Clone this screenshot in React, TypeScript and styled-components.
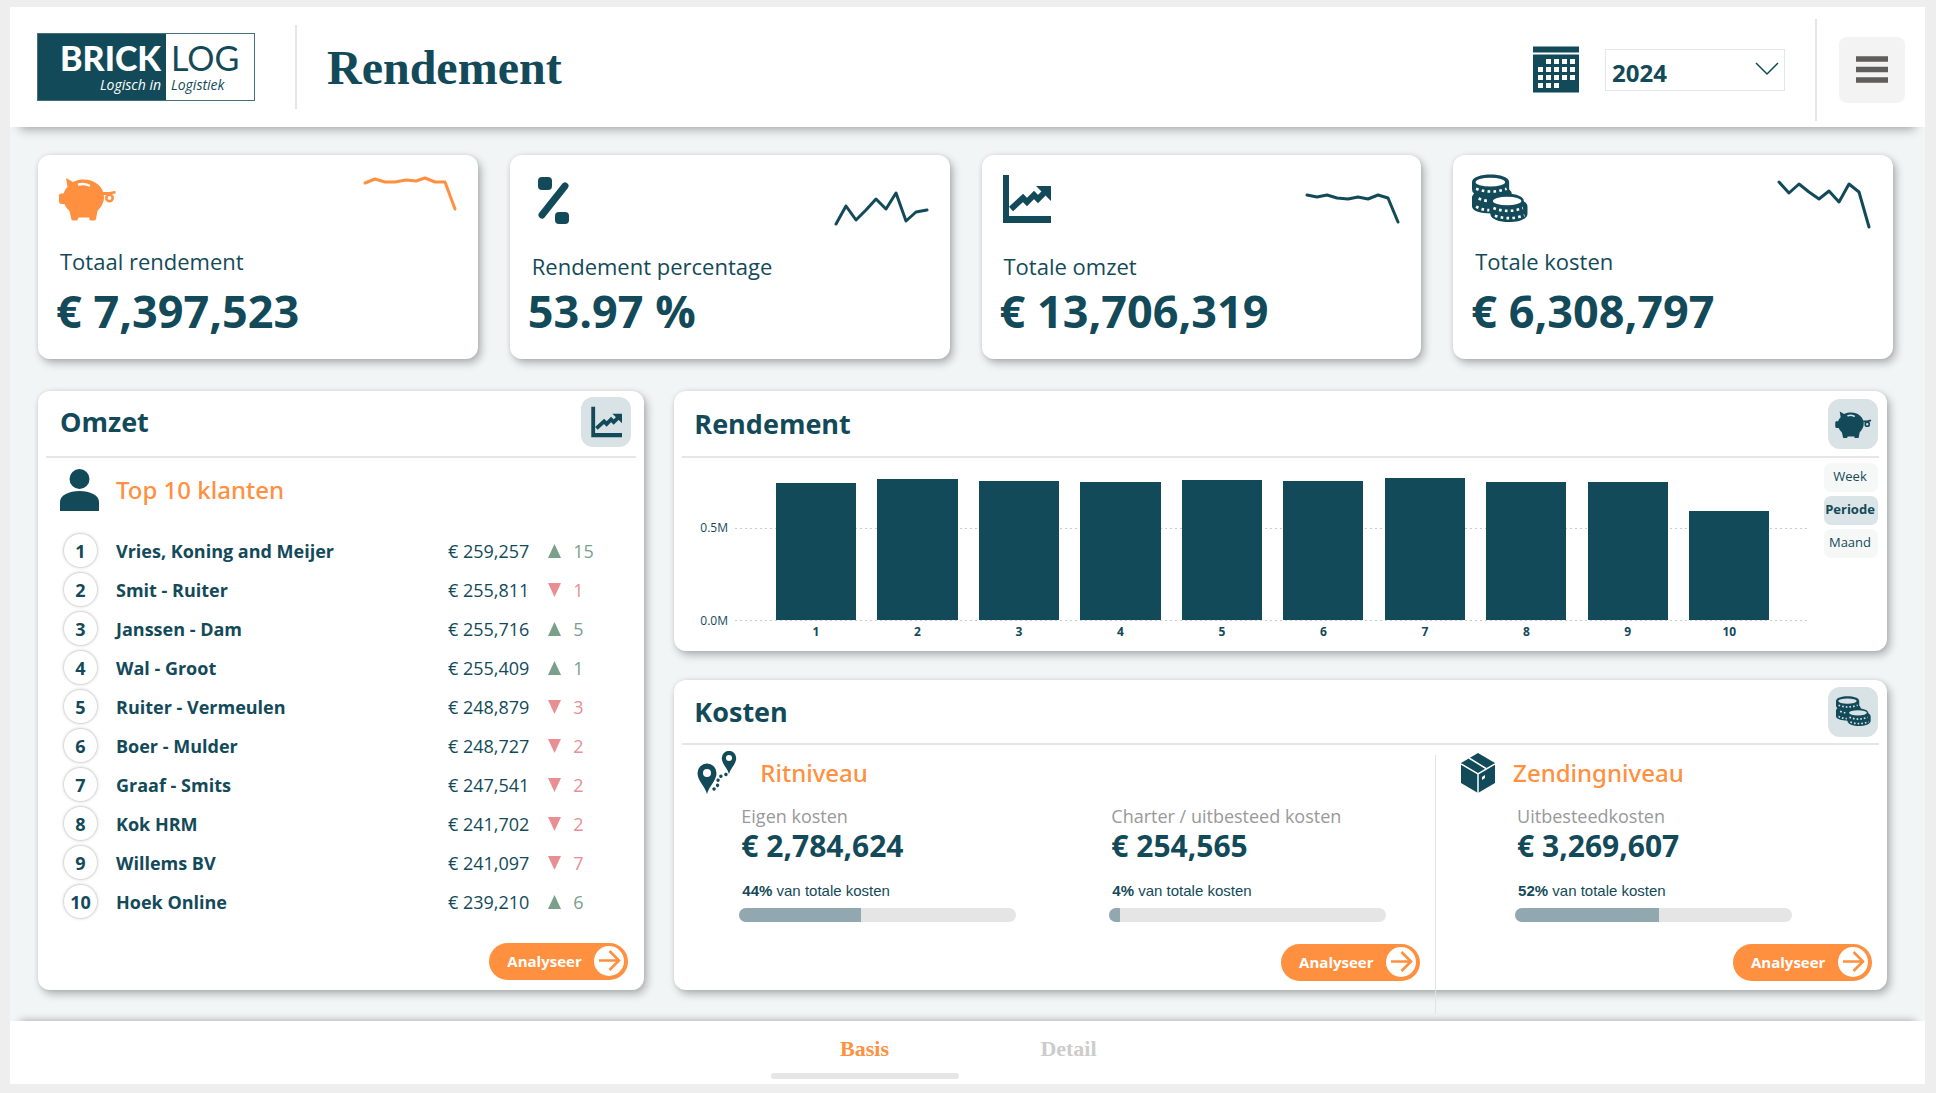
import React, { useState } from "react";
import styled, { createGlobalStyle } from "styled-components";

const TEAL = "#134a59";
const ORANGE = "#ff9040";
const SANS = '"Open Sans", "Noto Sans", sans-serif';
const SERIF = '"Liberation Serif", "Times New Roman", serif';

const GlobalStyle = createGlobalStyle`
  * { box-sizing: border-box; }
  body { margin: 0; background: #eeeeee; font-family: ${SANS}; color: ${TEAL}; }
  h1, h2, h3, p { margin: 0; }
  button { font-family: inherit; cursor: pointer; }
`;

const Frame = styled.div`
  margin: 7px 11px 9px 10px;
  display: flex;
  flex-direction: column;
  min-height: calc(100vh - 16px);
  background: #f1f5f6;
`;

const Header = styled.header`
  height: 120px;
  padding: 0 20px 0 27px;
  display: flex;
  align-items: center;
  background: #ffffff;
  box-shadow: 0 12px 10px -10px rgba(0, 0, 0, 0.35);
  clip-path: inset(0 0 -24px 0);
`;

const Logo = styled.div`
  width: 218px;
  height: 68px;
  margin-right: 40px;
  display: grid;
  grid-template-columns: 128px 1fr;
  border: 1px solid #45707b;
`;

const LogoHalf = styled.div<{ $dark?: boolean }>`
  padding: 8px 5px 0;
  display: flex;
  flex-direction: column;
  gap: 3px;
  text-align: ${(p) => (p.$dark ? "right" : "left")};
  background: ${(p) => (p.$dark ? TEAL : "#ffffff")};
  color: ${(p) => (p.$dark ? "#ffffff" : TEAL)};
`;

const LogoWord = styled.div<{ $heavy?: boolean }>`
  font: ${(p) => (p.$heavy ? 900 : 400)} 34px/32px Lato, sans-serif;
`;

const LogoTag = styled.div`
  font: italic 400 14px/16px ${SANS};
  white-space: nowrap;
`;

const Rule = styled.div<{ $height: number }>`
  width: 2px;
  height: ${(p) => p.$height}px;
  background: #e6e6e6;
`;

const Title = styled.h1`
  margin-left: 30px;
  padding-top: 2px;
  font: 700 48px/56px ${SERIF};
`;

const HeaderTools = styled.div`
  margin-left: auto;
  padding-top: 6px;
  display: flex;
  align-items: center;
`;

const YearBox = styled.label`
  width: 180px;
  height: 42px;
  margin: 0 30px 0 26px;
  position: relative;
  display: flex;
  border: 1px solid #e6e6e6;
  svg { position: absolute; right: 5px; top: 12px; pointer-events: none; }
`;

const YearSelect = styled.select`
  width: 100%;
  padding: 6px 0 0 6px;
  border: 0;
  background: transparent;
  appearance: none;
  color: ${TEAL};
  font: 700 24px/32px ${SANS};
`;

const MenuButton = styled.button`
  width: 66px;
  height: 66px;
  margin-left: 22px;
  padding: 0;
  display: grid;
  place-items: center;
  border: 0;
  border-radius: 8px;
  background: #f3f3f3;
`;

const Main = styled.main`
  flex: 1;
  padding: 28px 32px 31px 28px;
  display: flex;
  flex-direction: column;
  gap: 32px;
`;

const KpiGrid = styled.section`
  display: grid;
  grid-template-columns: repeat(4, 1fr);
  gap: 32px;
`;

const Card = styled.article`
  border-radius: 12px;
  background: #ffffff;
  box-shadow: 3px 4px 8px rgba(0, 0, 0, 0.28), 0 0 4px rgba(0, 0, 0, 0.08);
`;

const KpiCard = styled(Card)`
  height: 204px;
  padding: 15px 20px 0 18px;
  display: flex;
  flex-direction: column;
`;

const KpiTop = styled.div`
  height: 72px;
  display: flex;
  justify-content: space-between;
`;

const KpiIcon = styled.div<{ $color: string }>`
  padding: 4px 0 0 1px;
  color: ${(p) => p.$color};
`;

const KpiLabel = styled.h2<{ $low?: boolean }>`
  padding: ${(p) => (p.$low ? 8 : 3)}px 0 0 4px;
  height: 43px;
  font: 400 22px/32px ${SANS};
`;

const KpiValue = styled.p`
  font: 700 45px/52px ${SANS};
`;

const PanelGrid = styled.section`
  flex: 1;
  padding-right: 6px;
  display: grid;
  grid-template-columns: 1fr 2fr;
  gap: 30px;
`;

const Stack = styled.div`
  display: flex;
  flex-direction: column;
  gap: 29px;
`;

const Panel = styled(Card)<{ $grow?: boolean }>`
  flex: ${(p) => (p.$grow ? 1 : "none")};
  padding: 0 8px;
  display: flex;
  flex-direction: column;
`;

const PanelHeader = styled.header<{ $inset?: boolean; $compact?: boolean }>`
  height: ${(p) => (p.$compact ? 65 : 67)}px;
  padding: ${(p) => (p.$inset ? "0 5px 3px 14px" : "0 1px 0 12px")};
  display: flex;
  align-items: center;
  justify-content: space-between;
  border-bottom: 2px solid #e6e6e6;
`;

const PanelTitle = styled.h2`
  font: 700 27px/40px ${SANS};
`;

const IconButton = styled.button`
  width: 50px;
  height: 50px;
  padding: 0;
  display: grid;
  place-items: center;
  border: 0;
  border-radius: 12px;
  background: #d9e2e5;
  color: ${TEAL};
`;

const SubHeader = styled.div<{ $gap: number }>`
  height: 44px;
  display: flex;
  align-items: center;
  gap: ${(p) => p.$gap}px;
`;

const SubTitle = styled.h3`
  font: 500 24px/32px "Noto Sans", sans-serif;
  color: ${ORANGE};
`;

const Customers = styled.div`
  flex: 1;
  padding: 10px 8px 10px 14px;
  display: flex;
  flex-direction: column;
`;

const RankTable = styled.table`
  width: 100%;
  margin-top: 19px;
  border-collapse: collapse;
  td { height: 39px; padding: 0; font-size: 18px; line-height: 24px; }
`;

const RankCell = styled.td`
  width: 56px;
`;

const Rank = styled.span`
  width: 35px;
  height: 35px;
  margin-left: 3px;
  display: grid;
  place-items: center;
  border-radius: 50%;
  box-shadow: inset 0 0 0 1px #dadada, 0 0 3px rgba(0, 0, 0, 0.16);
  font-weight: 700;
`;

const NameCell = styled.td`
  font-weight: 700;
`;

const AmountCell = styled.td`
  text-align: right;
`;

const TrendCell = styled.td<{ $up: boolean }>`
  width: 99px;
  color: ${(p) => (p.$up ? "#7a9f8a" : "#e98f94")};
`;

const Trend = styled.span`
  padding-left: 19px;
  display: flex;
  align-items: center;
  gap: 12px;
`;

const AnalyseButton = styled.button`
  width: 139px;
  height: 37px;
  margin-top: auto;
  padding: 0 4px 1px 18px;
  align-self: flex-end;
  display: flex;
  align-items: center;
  justify-content: space-between;
  border: 0;
  border-radius: 19px;
  background: ${ORANGE};
  color: #ffffff;
  font: 700 15px/20px ${SANS};
`;

const ChartBody = styled.div`
  padding: 3px 1px 0 18px;
  display: grid;
  grid-template-columns: 35px 1fr 54px;
`;

const AxisY = styled.div`
  height: 168px;
  padding-top: 59px;
  display: flex;
  flex-direction: column;
  justify-content: space-between;
  font-size: 12px;
  line-height: 16px;
`;

const Plot = styled.div`
  height: 190px;
  padding-right: 14px;
  display: grid;
  grid-template: 160px 24px / 1fr;
`;

const GridLines = styled.div`
  grid-area: 1 / 1;
  margin-top: 67px;
  --dots: repeating-linear-gradient(90deg, #cccccc 0 2px, transparent 2px 5px);
  background: var(--dots) top / 100% 1px no-repeat, var(--dots) bottom / 100% 1px no-repeat;
`;

const Bars = styled.div`
  grid-area: 1 / 1;
  padding: 0 30px 1px;
  display: grid;
  grid-template-columns: repeat(10, 1fr);
  align-items: end;
`;

const Bar = styled.div`
  margin: 0 auto;
  width: 79%;
  background: ${TEAL};
`;

const AxisX = styled.div`
  padding: 0 30px;
  display: grid;
  grid-template-columns: repeat(10, 1fr);
  text-align: center;
  font-size: 12px;
  font-weight: 700;
  line-height: 22px;
`;

const Periods = styled.div`
  padding-top: 2px;
  display: flex;
  flex-direction: column;
  gap: 4px;
`;

const PeriodButton = styled.button<{ $active: boolean }>`
  height: 29px;
  padding: 0 2px 3px 0;
  border: 0;
  border-radius: 7px;
  background: ${(p) => (p.$active ? "#dbe4e6" : "#f6f8f8")};
  color: ${TEAL};
  font: ${(p) => (p.$active ? 700 : 400)} 13px/20px ${SANS};
`;

const CostBody = styled.div`
  flex: 1;
  display: grid;
  grid-template-columns: 753fr 444fr;
`;

const CostColumn = styled.section<{ $left: number; $right: number }>`
  padding: 6px ${(p) => p.$right}px 9px ${(p) => p.$left}px;
  display: flex;
  flex-direction: column;
`;

const TripColumn = styled(CostColumn)`
  position: relative;
  &::after {
    content: "";
    position: absolute;
    right: -1px;
    top: 10px;
    bottom: -24px;
    width: 1px;
    background: #e2e2e2;
  }
`;

const CostItems = styled.div<{ $indent: number }>`
  padding: 9px 0 0 ${(p) => p.$indent}px;
  display: grid;
  grid-template-columns: repeat(auto-fill, 277px);
  column-gap: 93px;
`;

const CostLabel = styled.p`
  padding-left: 2px;
  font-size: 18px;
  line-height: 24px;
  color: #999999;
`;

const CostValue = styled.p`
  padding-left: 2px;
  font: 700 30px/36px ${SANS};
`;

const CostShare = styled.p`
  padding: 17px 0 0 3px;
  font: 400 15px/20px "Liberation Sans", Arial, sans-serif;
`;

const Meter = styled.div`
  height: 14px;
  margin-top: 7px;
  border-radius: 7px;
  overflow: hidden;
  background: #e5e5e5;
`;

const MeterFill = styled.div`
  height: 100%;
  background: #91a8b0;
`;

const Footer = styled.footer`
  height: 63px;
  padding-right: 2px;
  display: flex;
  justify-content: center;
  gap: 16px;
  background: #ffffff;
  box-shadow: 0 -10px 8px -10px rgba(0, 0, 0, 0.35);
`;

const Tab = styled.a<{ $active?: boolean }>`
  width: 188px;
  padding: 16px 0 5px;
  display: flex;
  flex-direction: column;
  align-items: center;
  justify-content: space-between;
  font: 700 22px/24px ${SERIF};
  color: ${(p) => (p.$active ? ORANGE : "#cccccc")};
  text-decoration: none;
  &::after {
    content: "";
    width: 100%;
    height: 6px;
    border-radius: 3px;
    background: ${(p) => (p.$active ? "#e6e6e6" : "transparent")};
  }
`;

function PigIcon({ width, shine }: { width: number; shine: string }) {
  return (
    <svg width={width} viewBox="-2 -4 60 47" fill="currentColor" aria-hidden="true">
      <path d="M7 0 L14 4 C18 2 21 1.500 25 1.500 C36 1.500 45 9 45 19 C45 25 42 29 38.500 33 L37 41 Q36.500 42.500 35 42.500 H32 Q30.500 42.500 30.300 41 V39.500 H19.500 L19 41 Q18.500 42.500 17 42.500 H14 Q12.500 42.500 12.300 41 L10.500 33 C8 30.500 6.500 29 5.500 26 H2 Q0 25.500 0 23.500 V17.500 Q0 15.500 2 15.500 H4.500 C5.500 12.500 7 10.500 8.500 9 Z" />
      <path d="M20 6.500 Q25 5 30 7.500" fill="none" stroke={shine} strokeWidth="2.400" strokeLinecap="round" />
      <path d="M44 15.500 H50 L56.500 14" fill="none" stroke="currentColor" strokeWidth="2.800" />
      <circle cx="50.500" cy="20" r="3.200" fill="none" stroke="currentColor" strokeWidth="2.600" />
    </svg>
  );
}

function PercentIcon() {
  return (
    <svg width="44" height="51" viewBox="-2 -3 44 51" fill="currentColor" aria-hidden="true">
      <rect x="7" y="0" width="14" height="13" rx="4" />
      <rect x="24" y="35" width="14" height="12" rx="4" />
      <path d="M11 38 L34 9" stroke="currentColor" strokeWidth="7" strokeLinecap="round" />
    </svg>
  );
}

function GrowthIcon({ size }: { size: number }) {
  return (
    <svg width={size} height={size} viewBox="-2 -1 50 50" fill="currentColor" aria-hidden="true">
      <path d="M0 0 H6 V41 H48 V48 H0 Z" />
      <path d="M8 34 L20 23 L24 27 L31 20 L35 24 L42 17" fill="none" stroke="currentColor" strokeWidth="6" />
      <path d="M33 11 H48 V26 Z" />
    </svg>
  );
}

function CoinsIcon({ width, face }: { width: number; face: string }) {
  return (
    <svg width={width} viewBox="0 0 55 48" aria-hidden="true">
      <g fill="currentColor">
        <path d="M0 8 C0 -2 36.500 -2 36.500 8 V15 Q39 17 39 20 V32 C36 41 0 41 0 32 V22 L2 19 Q0 18 0 15 Z" />
        <path d="M19.500 27 C19.500 17 51 17 51 27 Q54.500 29 54.500 32 V39 C54.500 50 18 50 18 39 Z" />
      </g>
      <g fill="none" stroke={face} strokeWidth="2.600" strokeDasharray="2.600 3.200">
        <path d="M4 14.500 Q18.500 20 34 14.500" />
        <path d="M6.500 24 Q12 26.500 17 26.500" />
        <path d="M4 32 Q10 35.500 17 35.500" />
        <path d="M21 33.500 Q35 39 50 33.500" />
        <path d="M22.500 41 Q37 46 51.500 40.500" />
      </g>
      <g fill={face}>
        <ellipse cx="18" cy="8" rx="14.500" ry="4.200" />
        <ellipse cx="34.500" cy="26.500" rx="14" ry="4.200" />
      </g>
    </svg>
  );
}

function CalendarIcon() {
  const cells = [
    [1, 2, 3, 4],
    [0, 1, 2, 3, 4],
    [0, 1, 2, 3, 4],
    [0, 1, 2],
  ];
  return (
    <svg width="46" height="48" viewBox="0 0 46 48" aria-hidden="true">
      <path d="M0 0.500 H46 V6.500 H0 Z M0 8.500 H46 V46.500 H0 Z" fill={TEAL} />
      {cells.map((row, r) =>
        row.map((c) => <rect key={`${r}-${c}`} x={5 + c * 8} y={13 + r * 8} width="5" height="5" fill="#fff" />)
      )}
    </svg>
  );
}

function PersonIcon() {
  return (
    <svg width="39" height="42" viewBox="0 0 39 42" fill="currentColor" aria-hidden="true">
      <circle cx="19.500" cy="10" r="10" />
      <path d="M0 42 V33 C0 26 9 22 19.500 22 C30 22 39 26 39 33 V42 Z" />
    </svg>
  );
}

function RouteIcon() {
  const pin = "M0 0 C-2 -8 -9.500 -13 -9.500 -21 A9.500 9.500 0 0 1 9.500 -21 C9.500 -13 2 -8 0 0 Z M0 -25 A4 4 0 1 0 0 -17 A4 4 0 1 0 0 -25 Z";
  return (
    <svg width="40" height="44" viewBox="0 0 40 44" fill="currentColor" fillRule="evenodd" aria-hidden="true">
      <path d={pin} transform="translate(10 43)" />
      <path d={pin} transform="translate(32 23) scale(.76)" />
      <path d="M17 38 Q22 35 21 30 Q21 25 29 23.500" fill="none" stroke="currentColor" strokeWidth="3.400" strokeLinecap="round" strokeDasharray="0.100 5" />
    </svg>
  );
}

function BoxIcon() {
  return (
    <svg width="34" height="40" viewBox="0 0 34 40" aria-hidden="true">
      <path d="M17 0 L34 10 V30 L17 40 L0 30 V10 Z" fill="currentColor" />
      <path d="M0 11 L17 21 L34 11 M17 21 V40 M8 5 L25 15.500" fill="none" stroke="#fff" strokeWidth="1.500" />
      <path d="M21 24 L24 22 V25 L21 27 Z" fill="#fff" />
    </svg>
  );
}

function ArrowIcon() {
  return (
    <svg width="30" height="30" viewBox="0 0 30 30" aria-hidden="true">
      <circle cx="15" cy="15" r="15" fill="#fff" />
      <path d="M5 14.500 H25 M15.500 5 L25 14.500 L15.500 24" fill="none" stroke={ORANGE} strokeWidth="2.600" />
    </svg>
  );
}

function Sparkline({ points, color }: { points: string; color: string }) {
  return (
    <svg width="96" height="64" viewBox="0 0 96 64" aria-hidden="true">
      <polyline points={points} fill="none" stroke={color} strokeWidth="3" strokeLinejoin="round" strokeLinecap="round" />
    </svg>
  );
}

const kpis = [
  {
    label: "Totaal rendement", value: "€ 7,397,523", color: ORANGE, low: false,
    icon: <PigIcon width={60} shine="#ffffff" />, points: "3,13 13,9 23,12 33,12 44,10 54,11 63,8 73,12 83,12 93,39",
  },
  {
    label: "Rendement percentage", value: "53.97 %", color: TEAL, low: true,
    icon: <PercentIcon />, points: "2,54 12,36 22,50 32,40 42,29 52,39 62,23 72,51 82,42 93,40",
  },
  {
    label: "Totale omzet", value: "€ 13,706,319", color: TEAL, low: true,
    icon: <GrowthIcon size={50} />, points: "2,25 12,27 22,25 32,28 43,29 53,27 63,29 73,25 83,28 93,52",
  },
  {
    label: "Totale kosten", value: "€ 6,308,797", color: TEAL, low: false,
    icon: <CoinsIcon width={56} face="#ffffff" />, points: "2,12 12,23 22,14 32,22 42,29 52,21 62,32 72,14 82,22 92,57",
  },
];

const customers: [string, string, number][] = [
  ["Vries, Koning and Meijer", "259,257", 15],
  ["Smit - Ruiter", "255,811", -1],
  ["Janssen - Dam", "255,716", 5],
  ["Wal - Groot", "255,409", 1],
  ["Ruiter - Vermeulen", "248,879", -3],
  ["Boer - Mulder", "248,727", -2],
  ["Graaf - Smits", "247,541", -2],
  ["Kok HRM", "241,702", -2],
  ["Willems BV", "241,097", -7],
  ["Hoek Online", "239,210", 6],
];

const returns = [137, 141, 139, 138, 140, 139, 142, 138, 138, 109];
const periods = ["Week", "Periode", "Maand"];

function Analyse() {
  return (
    <AnalyseButton type="button">
      Analyseer
      <ArrowIcon />
    </AnalyseButton>
  );
}

function Cost({ label, value, share }: { label: string; value: string; share: number }) {
  return (
    <div>
      <CostLabel>{label}</CostLabel>
      <CostValue>{value}</CostValue>
      <CostShare><b>{share}%</b> van totale kosten</CostShare>
      <Meter role="progressbar" aria-label={label} aria-valuenow={share} aria-valuemin={0} aria-valuemax={100}>
        <MeterFill style={{ width: `${share}%` }} />
      </Meter>
    </div>
  );
}

export default function App() {
  const [period, setPeriod] = useState("Periode");
  return (
    <>
      <GlobalStyle />
      <Frame>
        <Header>
          <Logo>
            <LogoHalf $dark>
              <LogoWord $heavy>BRICK</LogoWord>
              <LogoTag>Logisch in</LogoTag>
            </LogoHalf>
            <LogoHalf>
              <LogoWord>LOG</LogoWord>
              <LogoTag>Logistiek</LogoTag>
            </LogoHalf>
          </Logo>
          <Rule $height={84} />
          <Title>Rendement</Title>
          <HeaderTools>
            <CalendarIcon />
            <YearBox>
              <YearSelect aria-label="Jaar" defaultValue="2024">
                <option>2024</option>
                <option>2023</option>
              </YearSelect>
              <svg width="24" height="14" viewBox="0 0 24 14" aria-hidden="true">
                <path d="M1 1 L12 12 L23 1" fill="none" stroke={TEAL} strokeWidth="1.500" />
              </svg>
            </YearBox>
            <Rule $height={102} />
            <MenuButton type="button" aria-label="Menu">
              <svg width="32" height="28" viewBox="0 0 32 28" aria-hidden="true">
                <path d="M0 3 H32 M0 13.500 H32 M0 24 H32" stroke="#605e5c" strokeWidth="5.500" />
              </svg>
            </MenuButton>
          </HeaderTools>
        </Header>

        <Main>
          <KpiGrid>
            {kpis.map((k) => (
              <KpiCard key={k.label}>
                <KpiTop>
                  <KpiIcon $color={k.color}>{k.icon}</KpiIcon>
                  <Sparkline points={k.points} color={k.color} />
                </KpiTop>
                <KpiLabel $low={k.low}>{k.label}</KpiLabel>
                <KpiValue>{k.value}</KpiValue>
              </KpiCard>
            ))}
          </KpiGrid>

          <PanelGrid>
            <Panel>
              <PanelHeader $inset>
                <PanelTitle>Omzet</PanelTitle>
                <IconButton type="button" aria-label="Omzet"><GrowthIcon size={32} /></IconButton>
              </PanelHeader>
              <Customers>
                <SubHeader $gap={17}>
                  <PersonIcon />
                  <SubTitle>Top 10 klanten</SubTitle>
                </SubHeader>
                <RankTable>
                  <tbody>
                    {customers.map(([name, amount, change], i) => (
                      <tr key={name}>
                        <RankCell><Rank>{i + 1}</Rank></RankCell>
                        <NameCell>{name}</NameCell>
                        <AmountCell>€ {amount}</AmountCell>
                        <TrendCell $up={change > 0}>
                          <Trend>
                            <svg width="13" height="14" viewBox="0 0 13 14" fill="currentColor" aria-hidden="true">
                              <path d={change > 0 ? "M0 14 L6.500 0 L13 14 Z" : "M0 0 H13 L6.500 14 Z"} />
                            </svg>
                            {Math.abs(change)}
                          </Trend>
                        </TrendCell>
                      </tr>
                    ))}
                  </tbody>
                </RankTable>
                <Analyse />
              </Customers>
            </Panel>

            <Stack>
              <Panel>
                <PanelHeader>
                  <PanelTitle>Rendement</PanelTitle>
                  <IconButton type="button" aria-label="Rendement"><PigIcon width={38} shine="#d9e2e5" /></IconButton>
                </PanelHeader>
                <ChartBody>
                  <AxisY>
                    <span>0.5M</span>
                    <span>0.0M</span>
                  </AxisY>
                  <Plot>
                    <GridLines />
                    <Bars>
                      {returns.map((v, i) => <Bar key={i} style={{ height: v }} />)}
                    </Bars>
                    <AxisX>
                      {returns.map((_, i) => <span key={i}>{i + 1}</span>)}
                    </AxisX>
                  </Plot>
                  <Periods>
                    {periods.map((p) => (
                      <PeriodButton key={p} type="button" $active={p === period} onClick={() => setPeriod(p)}>{p}</PeriodButton>
                    ))}
                  </Periods>
                </ChartBody>
              </Panel>

              <Panel $grow>
                <PanelHeader $compact>
                  <PanelTitle>Kosten</PanelTitle>
                  <IconButton type="button" aria-label="Kosten"><CoinsIcon width={35} face="#d9e2e5" /></IconButton>
                </PanelHeader>
                <CostBody>
                  <TripColumn $left={15} $right={15}>
                    <SubHeader $gap={23}>
                      <RouteIcon />
                      <SubTitle>Ritniveau</SubTitle>
                    </SubHeader>
                    <CostItems $indent={42}>
                      <Cost label="Eigen kosten" value="€ 2,784,624" share={44} />
                      <Cost label="Charter / uitbesteed kosten" value="€ 254,565" share={4} />
                    </CostItems>
                    <Analyse />
                  </TripColumn>
                  <CostColumn $left={26} $right={7}>
                    <SubHeader $gap={18}>
                      <BoxIcon />
                      <SubTitle>Zendingniveau</SubTitle>
                    </SubHeader>
                    <CostItems $indent={54}>
                      <Cost label="Uitbesteedkosten" value="€ 3,269,607" share={52} />
                    </CostItems>
                    <Analyse />
                  </CostColumn>
                </CostBody>
              </Panel>
            </Stack>
          </PanelGrid>
        </Main>

        <Footer>
          <Tab href="#basis" $active>Basis</Tab>
          <Tab href="#detail">Detail</Tab>
        </Footer>
      </Frame>
    </>
  );
}
